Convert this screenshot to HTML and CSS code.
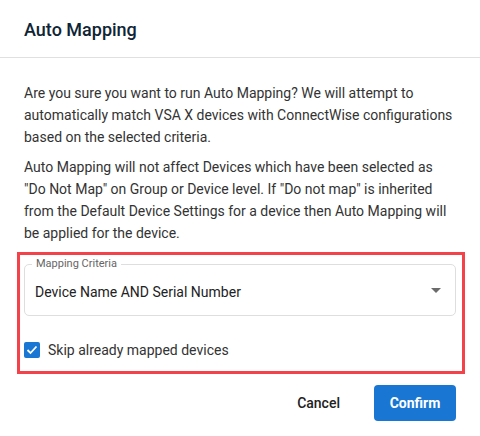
FILE: index.html
```html
<!DOCTYPE html>
<html>
<head>
<meta charset="utf-8">
<link rel="stylesheet" href="styles.css">
</head>
<body>
<div class="dialog">
  <div class="dialog-header">
    <h2 class="dialog-title">Auto Mapping</h2>
  </div>
  <div class="dialog-body">
    <p class="text">Are you sure you want to run Auto Mapping? We will attempt to automatically match VSA X devices with ConnectWise configurations based on the selected criteria.</p>
    <p class="text">Auto Mapping will not affect Devices which have been selected as "Do Not Map" on Group or Device level. If "Do not map" is inherited from the Default Device Settings for a device then Auto Mapping will be applied for the device.</p>
    <div class="highlight">
      <div class="select">
        <span class="select-label">Mapping Criteria</span>
        <span class="select-value">Device Name AND Serial Number</span>
        <svg class="select-arrow" width="10" height="5" viewBox="0 0 10 5"><path d="M0 0 L10 0 L5 5 Z" fill="#6b6b6b"/></svg>
      </div>
      <label class="check-row">
        <span class="checkbox">
          <svg width="12" height="10" viewBox="0 0 12 10"><path d="M1.5 5 L4.5 8 L10.5 1.5" fill="none" stroke="#fff" stroke-width="1.8"/></svg>
        </span>
        <span class="check-label">Skip already mapped devices</span>
      </label>
    </div>
  </div>
  <div class="dialog-actions">
    <button class="btn btn-text">Cancel</button>
    <button class="btn btn-primary">Confirm</button>
  </div>
</div>
</body>
</html>
```
FILE: styles.css
```css
html, body {
  margin: 0;
  padding: 0;
  background: #fff;
}
body {
  font-family: Roboto, "Liberation Sans", sans-serif;
  color: #333;
}
.dialog {
  width: 480px;
  height: 436px;
  display: flex;
  flex-direction: column;
}
.dialog-header {
  padding: 16px 24px 13px;
  border-bottom: 1px solid #e0e0e0;
}
.dialog-title {
  margin: 0;
  font-size: 18px;
  font-weight: 500;
  line-height: 28px;
  color: #0f2435;
}
.dialog-body {
  padding: 24px 24px 0;
}
.text {
  margin: 0 0 8px;
  font-size: 14px;
  line-height: 22px;
  color: #333;
}
.highlight {
  margin: 2px -9px 0 -7px;
  border: 3px solid #f4424a;
  padding: 9px 6px 13px 4px;
}
.select {
  position: relative;
  height: 50px;
  border: 1px solid #dedede;
  border-radius: 5px;
  display: flex;
  align-items: center;
  padding: 0 10px;
}
.select-label {
  position: absolute;
  top: -8px;
  left: 7px;
  padding: 0 4px;
  background: #fff;
  font-size: 11px;
  line-height: 14px;
  color: #666;
}
.select-value {
  flex: 1;
  font-size: 14px;
  color: #222;
  padding-top: 4px;
}
.select-arrow {
  margin-right: 4px;
}
.check-row {
  display: flex;
  align-items: center;
  gap: 8px;
  margin-top: 26px;
}
.checkbox {
  width: 16px;
  height: 16px;
  border-radius: 2px;
  background: #1976d2;
  display: flex;
  align-items: center;
  justify-content: center;
}
.check-label {
  font-size: 14px;
  color: #333;
}
.dialog-actions {
  display: flex;
  justify-content: flex-end;
  align-items: center;
  gap: 18px;
  padding: 11px 24px 0;
}
.btn {
  font-family: Roboto, "Liberation Sans", sans-serif;
  font-size: 14px;
  font-weight: 500;
  border: none;
  height: 36px;
  border-radius: 4px;
  cursor: pointer;
}
.btn-text {
  background: transparent;
  color: #222;
  padding: 0 16px;
}
.btn-primary {
  background: #1976d2;
  color: #fff;
  padding: 0 15px;
  width: 82px;
  font-weight: 700;
}
```
